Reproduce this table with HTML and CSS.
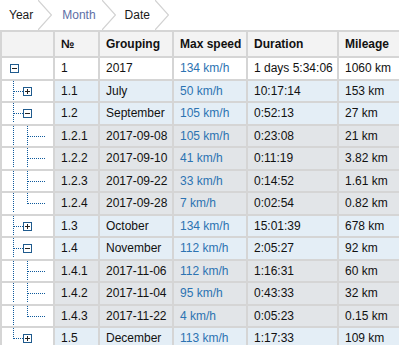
FILE: index.html
```html
<!DOCTYPE html>
<html lang="en">
<head>
    <meta charset="UTF-8">
    <title>Trips</title>
    <link rel="stylesheet" href="styles.css">
</head>
<body>
    <svg class="defs" width="0" height="0">
        <symbol id="plus" viewBox="0 0 9 9">
            <rect x="0.5" y="0.5" width="8" height="8" fill="#fff" stroke="#1f5b8e"/>
            <path d="M2 4.5h5M4.5 2v5" stroke="#222" stroke-width="1"/>
        </symbol>
        <symbol id="minus" viewBox="0 0 9 9">
            <rect x="0.5" y="0.5" width="8" height="8" fill="#fff" stroke="#1f5b8e"/>
            <path d="M2 4.5h5" stroke="#222" stroke-width="1"/>
        </symbol>
    </svg>

    <nav class="crumbs">
        <span class="crumb">Year</span>
        <svg class="chevron" viewBox="0 0 14 30"><polyline points="0,0 13.5,15 0,30"/></svg>
        <span class="crumb link">Month</span>
        <svg class="chevron" viewBox="0 0 14 30"><polyline points="0,0 13.5,15 0,30"/></svg>
        <span class="crumb">Date</span>
        <svg class="chevron" viewBox="0 0 14 30"><polyline points="0,0 13.5,15 0,30"/></svg>
    </nav>

    <table class="grid">
        <colgroup>
            <col class="c-tree">
            <col class="c-num">
            <col class="c-group">
            <col class="c-speed">
            <col class="c-dur">
            <col class="c-mile">
        </colgroup>
        <thead>
            <tr>
                <th></th>
                <th>№</th>
                <th>Grouping</th>
                <th>Max speed</th>
                <th>Duration</th>
                <th>Mileage</th>
            </tr>
        </thead>
        <tbody>
            <tr class="lvl0">
                <td class="tree"><svg viewBox="0 0 50 20"><use href="#minus" x="8" y="6" width="9" height="9"/></svg></td>
                <td>1</td><td>2017</td><td class="speed">134 km/h</td><td>1 days 5:34:06</td><td>1060 km</td>
            </tr>
            <tr class="lvl1">
                <td class="tree"><svg viewBox="0 0 50 20"><rect class="vl" x="11" y="0" width="1" height="20"/><rect class="hl" x="12" y="10" width="9" height="1"/><use href="#plus" x="21" y="6" width="9" height="9"/></svg></td>
                <td>1.1</td><td>July</td><td class="speed">50 km/h</td><td>10:17:14</td><td>153 km</td>
            </tr>
            <tr class="lvl1">
                <td class="tree"><svg viewBox="0 0 50 20"><rect class="vl" x="11" y="0" width="1" height="20"/><rect class="hl" x="12" y="10" width="9" height="1"/><use href="#minus" x="21" y="6" width="9" height="9"/></svg></td>
                <td>1.2</td><td>September</td><td class="speed">105 km/h</td><td>0:52:13</td><td>27 km</td>
            </tr>
            <tr class="lvl2">
                <td class="tree"><svg viewBox="0 0 50 20"><rect class="vl" x="11" y="0" width="1" height="20"/><rect class="vl" x="25" y="0" width="1" height="20"/><rect class="hl" x="26" y="10" width="18" height="1"/></svg></td>
                <td>1.2.1</td><td>2017-09-08</td><td class="speed">105 km/h</td><td>0:23:08</td><td>21 km</td>
            </tr>
            <tr class="lvl2">
                <td class="tree"><svg viewBox="0 0 50 20"><rect class="vl" x="11" y="0" width="1" height="20"/><rect class="vl" x="25" y="0" width="1" height="20"/><rect class="hl" x="26" y="10" width="18" height="1"/></svg></td>
                <td>1.2.2</td><td>2017-09-10</td><td class="speed">41 km/h</td><td>0:11:19</td><td>3.82 km</td>
            </tr>
            <tr class="lvl2">
                <td class="tree"><svg viewBox="0 0 50 20"><rect class="vl" x="11" y="0" width="1" height="20"/><rect class="vl" x="25" y="0" width="1" height="20"/><rect class="hl" x="26" y="10" width="18" height="1"/></svg></td>
                <td>1.2.3</td><td>2017-09-22</td><td class="speed">33 km/h</td><td>0:14:52</td><td>1.61 km</td>
            </tr>
            <tr class="lvl2">
                <td class="tree"><svg viewBox="0 0 50 20"><rect class="vl" x="11" y="0" width="1" height="20"/><rect class="vl" x="25" y="0" width="1" height="11"/><rect class="hl" x="26" y="10" width="18" height="1"/></svg></td>
                <td>1.2.4</td><td>2017-09-28</td><td class="speed">7 km/h</td><td>0:02:54</td><td>0.82 km</td>
            </tr>
            <tr class="lvl1">
                <td class="tree"><svg viewBox="0 0 50 20"><rect class="vl" x="11" y="0" width="1" height="20"/><rect class="hl" x="12" y="10" width="9" height="1"/><use href="#plus" x="21" y="6" width="9" height="9"/></svg></td>
                <td>1.3</td><td>October</td><td class="speed">134 km/h</td><td>15:01:39</td><td>678 km</td>
            </tr>
            <tr class="lvl1">
                <td class="tree"><svg viewBox="0 0 50 20"><rect class="vl" x="11" y="0" width="1" height="20"/><rect class="hl" x="12" y="10" width="9" height="1"/><use href="#minus" x="21" y="6" width="9" height="9"/></svg></td>
                <td>1.4</td><td>November</td><td class="speed">112 km/h</td><td>2:05:27</td><td>92 km</td>
            </tr>
            <tr class="lvl2">
                <td class="tree"><svg viewBox="0 0 50 20"><rect class="vl" x="11" y="0" width="1" height="20"/><rect class="vl" x="25" y="0" width="1" height="20"/><rect class="hl" x="26" y="10" width="18" height="1"/></svg></td>
                <td>1.4.1</td><td>2017-11-06</td><td class="speed">112 km/h</td><td>1:16:31</td><td>60 km</td>
            </tr>
            <tr class="lvl2">
                <td class="tree"><svg viewBox="0 0 50 20"><rect class="vl" x="11" y="0" width="1" height="20"/><rect class="vl" x="25" y="0" width="1" height="20"/><rect class="hl" x="26" y="10" width="18" height="1"/></svg></td>
                <td>1.4.2</td><td>2017-11-04</td><td class="speed">95 km/h</td><td>0:43:33</td><td>32 km</td>
            </tr>
            <tr class="lvl2">
                <td class="tree"><svg viewBox="0 0 50 20"><rect class="vl" x="11" y="0" width="1" height="20"/><rect class="vl" x="25" y="0" width="1" height="11"/><rect class="hl" x="26" y="10" width="18" height="1"/></svg></td>
                <td>1.4.3</td><td>2017-11-22</td><td class="speed">4 km/h</td><td>0:05:23</td><td>0.15 km</td>
            </tr>
            <tr class="lvl1">
                <td class="tree"><svg viewBox="0 0 50 20"><rect class="vl" x="11" y="0" width="1" height="11"/><rect class="hl" x="12" y="10" width="9" height="1"/><use href="#plus" x="21" y="6" width="9" height="9"/></svg></td>
                <td>1.5</td><td>December</td><td class="speed">113 km/h</td><td>1:17:33</td><td>109 km</td>
            </tr>
        </tbody>
    </table>

    <svg class="defs" width="0" height="0">
        <defs>
            <pattern id="vdots" width="1" height="2" patternUnits="userSpaceOnUse">
                <rect width="1" height="1" fill="#0f5a9c"/>
            </pattern>
            <pattern id="hdots" width="2" height="1" patternUnits="userSpaceOnUse">
                <rect width="1" height="1" fill="#0f5a9c"/>
            </pattern>
        </defs>
    </svg>
</body>
</html>
```

FILE: styles.css
```css
* {
    margin: 0;
    padding: 0;
    box-sizing: border-box;
}

body {
    font-family: 'Liberation Sans', Arial, sans-serif;
    font-size: 12px;
    color: #111;
    background: #fff;
    width: 399px;
    height: 345px;
    overflow: hidden;
}

.defs {
    display: block;
    position: absolute;
    width: 0;
    height: 0;
}

/* breadcrumbs */
.crumbs {
    display: flex;
    align-items: center;
    height: 30px;
    background: #fff;
}

.crumb {
    padding: 0 5px 0 9px;
    line-height: 30px;
    color: #1a1a1a;
}

.crumb.link {
    padding: 0 6px 0 10px;
    color: #5d6ea6;
}

.chevron {
    width: 14px;
    height: 30px;
    display: block;
}

.chevron polyline {
    fill: none;
    stroke: #d2d2d2;
    stroke-width: 1.2;
}

/* grid */
.grid {
    border-collapse: collapse;
    table-layout: fixed;
    width: 399px;
}

.c-tree { width: 53px; }
.c-num { width: 45px; }
.c-group { width: 74px; }
.c-speed { width: 74px; }
.c-dur { width: 91px; }
.c-mile { width: 62px; }

.grid th,
.grid td {
    border: 2px solid #d5d5d5;
    text-align: left;
    padding: 0 5px 0 6px;
    white-space: nowrap;
    overflow: hidden;
}

.grid th {
    background: #f3f3f3;
    font-weight: bold;
    color: #111;
    height: 26px;
}

.grid td {
    height: 22.5px;
}

.grid td.tree {
    padding: 0;
    background: #fff;
}

.tree svg {
    display: block;
    width: 50px;
    height: 20px;
}

.vl { fill: url(#vdots); }
.hl { fill: url(#hdots); }

.lvl0 td { background: #fff; }
.lvl1 td { background: #e4eef6; }
.lvl2 td { background: #e2e5e8; }

.speed {
    color: #2c73b2;
}
```
